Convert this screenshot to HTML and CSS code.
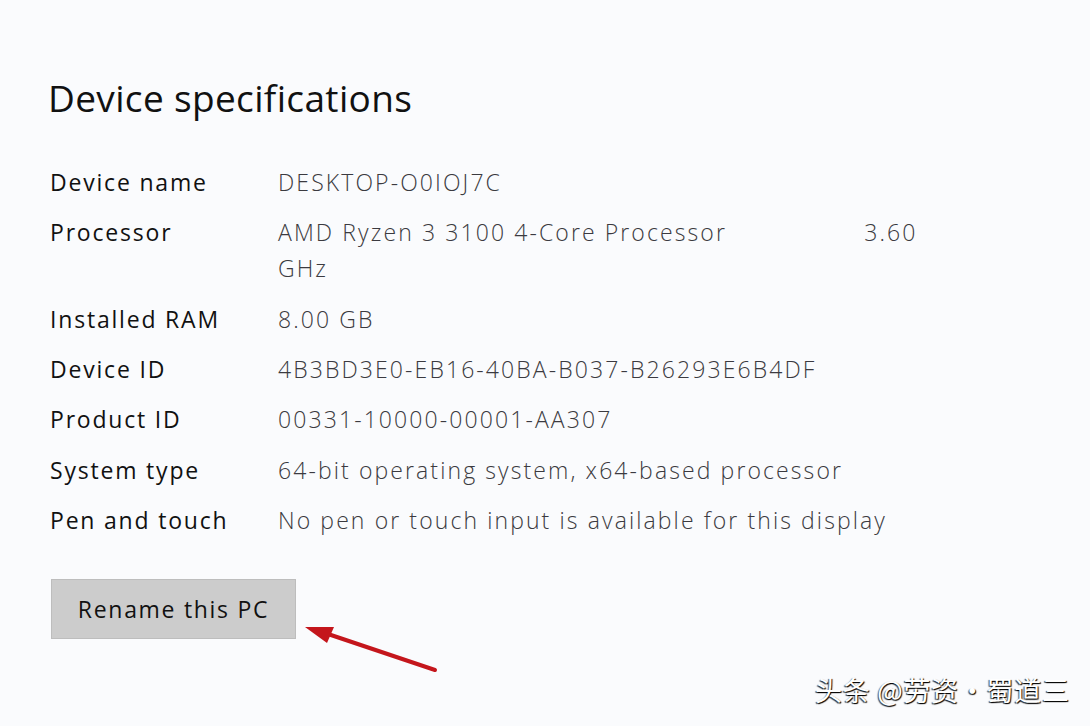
FILE: index.html
```html
<!DOCTYPE html>
<html lang="en">
<head>
<meta charset="utf-8">
<title>Device specifications</title>
<link rel="stylesheet" href="styles.css">
</head>
<body>
<main class="page">
  <h1 class="title">Device specifications</h1>
  <dl class="specs">
    <dt>Device name</dt><dd>DESKTOP-O0IOJ7C</dd>
    <dt>Processor</dt><dd class="proc">AMD Ryzen 3 3100 4-Core Processor                 3.60 GHz</dd>
    <dt>Installed RAM</dt><dd>8.00 GB</dd>
    <dt>Device ID</dt><dd>4B3BD3E0-EB16-40BA-B037-B26293E6B4DF</dd>
    <dt>Product ID</dt><dd>00331-10000-00001-AA307</dd>
    <dt>System type</dt><dd>64-bit operating system, x64-based processor</dd>
    <dt>Pen and touch</dt><dd>No pen or touch input is available for this display</dd>
  </dl>
  <button class="rename" type="button">Rename this PC</button>
</main>
<svg class="arrow" width="1090" height="726" viewBox="0 0 1090 726" aria-hidden="true">
  <line x1="435" y1="670" x2="322" y2="632" stroke="#c4161c" stroke-width="4" stroke-linecap="round"/>
  <polygon points="305,627 334,627 327,643" fill="#c4161c"/>
</svg>
<div class="watermark">头条 @劳资・蜀道三</div>
</body>
</html>
```
FILE: styles.css
```css
html, body {
  margin: 0;
  padding: 0;
}
body {
  width: 1090px;
  height: 726px;
  background: #fafbfd;
  position: relative;
  overflow: hidden;
  font-family: "Open Sans", "Noto Sans", sans-serif;
}
.page {
  padding: 74px 0 0 48px;
}
.title {
  margin: 0 0 42px 0;
  font-size: 37px;
  line-height: 48px;
  font-weight: 400;
  color: #111;
  letter-spacing: 0.35px;
}
.specs {
  display: grid;
  grid-template-columns: 228px 640px;
  row-gap: 14.34px;
  margin: 0 0 0 2px;
  font-size: 23px;
  line-height: 36px;
}
.specs dt {
  color: #111;
  font-weight: 400;
  letter-spacing: 1.8px;
}
.specs dd {
  margin: 0;
  color: #3b3a40;
  font-weight: 300;
  letter-spacing: 2.1px;
}
.specs .proc {
  white-space: pre-wrap;
}
.rename {
  margin: 41px 0 0 3px;
  width: 245px;
  height: 60px;
  background: #cccccc;
  border: 1px solid #bdbdbd;
  font-family: inherit;
  font-size: 23px;
  letter-spacing: 1.7px;
  color: #111;
  padding: 0;
}
.arrow {
  position: absolute;
  left: 0;
  top: 0;
  pointer-events: none;
}
.watermark {
  position: absolute;
  left: 815px;
  top: 673px;
  font-family: "Noto Sans CJK SC", sans-serif;
  font-size: 27px;
  line-height: 34px;
  letter-spacing: 0.7px;
  color: #fff;
  text-shadow: 1px 1px 1px #000, -1px 1px 1px rgba(0,0,0,0.7);
  white-space: nowrap;
}
```
